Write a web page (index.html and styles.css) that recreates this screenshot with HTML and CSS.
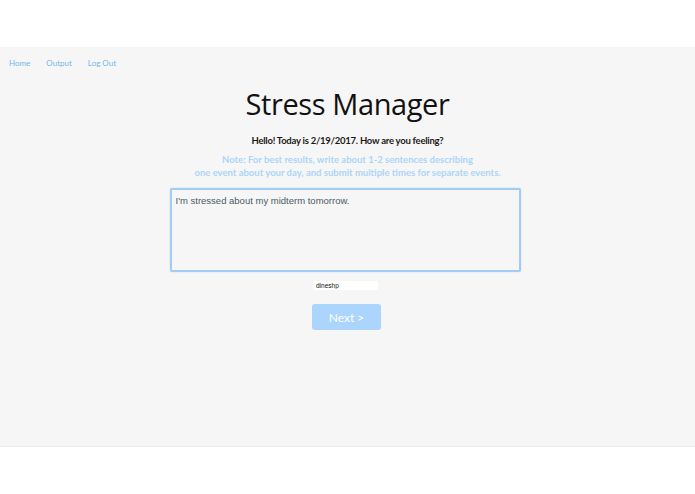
FILE: index.html
```html
<!DOCTYPE html>
<html lang="en">
<head>
	<meta charset="UTF-8">
	<title>Stress Manager</title>
	<link rel="stylesheet" href="styles.css">
</head>
<body>
	<div class="top"></div>
	<div class="page">
		<ul class="nav">
			<li><a href="#">Home</a></li>
			<li><a href="#">Output</a></li>
			<li><a href="#">Log Out</a></li>
		</ul>
		<div class="main">
			<h1 class="title">Stress Manager</h1>
			<p class="hello">Hello! Today is 2/19/2017. How are you feeling?</p>
			<p class="note">Note: For best results, write about 1-2 sentences describing<br>one event about your day, and submit multiple times for separate events.</p>
			<textarea class="entry">I'm stressed about my midterm tomorrow.</textarea>
			<input class="user" type="text" value="dineshp">
			<button class="next">Next &gt;</button>
		</div>
	</div>
</body>
</html>
```

FILE: styles.css
```css
*{
	margin: 0;
	padding: 0;
	box-sizing: border-box;
}
ul,li{
	list-style: none;
}
body{
	background: #fff;
	font-family: Lato, "Liberation Sans", sans-serif;
}
.top{
	height: 47px;
}
.page{
	height: 400px;
	background: #f6f6f6;
	border-bottom: 1px solid #ececec;
	padding-top: 3px;
}
.nav{
	display: flex;
	gap: 16px;
	padding-left: 9px;
}
.nav a{
	color: #74b6ec;
	font-size: 8px;
	text-decoration: none;
	line-height: 12px;
}
.main{
	display: flex;
	flex-direction: column;
	align-items: center;
	padding-top: 15px;
}
.title{
	font-family: "Open Sans", "Liberation Sans", sans-serif;
	font-size: 29px;
	font-weight: 500;
	color: #111;
	line-height: 40px;
	letter-spacing: -0.4px;
}
.hello{
	margin-top: 10px;
	font-size: 9.5px;
	font-weight: 700;
	color: #1a1a1a;
	line-height: 14px;
	letter-spacing: -0.25px;
}
.note{
	margin-top: 5px;
	font-size: 9.5px;
	font-weight: 700;
	color: #acd5f7;
	text-align: center;
	line-height: 13px;
}
.entry{
	margin-top: 9px;
	margin-right: 5px;
	width: 351px;
	height: 84px;
	border: 2px solid #a3cbf3;
	border-radius: 2px;
	box-shadow: 0 0 2px #c6def7;
	background: #f6f6f6;
	padding: 5px 4px;
	font-family: "Liberation Sans", Arial, sans-serif;
	font-size: 9.5px;
	color: #4a5c66;
	resize: none;
	outline: none;
}
.user{
	margin-top: 9px;
	margin-left: -4px;
	width: 65px;
	height: 9px;
	border: none;
	background: #fff;
	font-family: "Liberation Sans", Arial, sans-serif;
	font-size: 6.5px;
	color: #111;
	padding: 0 3px;
}
.next{
	margin-top: 14px;
	margin-left: -2px;
	width: 69px;
	height: 26px;
	border: none;
	border-radius: 3px;
	background: #abd5fd;
	color: #fff;
	font-family: Lato, "Liberation Sans", sans-serif;
	font-size: 12px;
}
```
